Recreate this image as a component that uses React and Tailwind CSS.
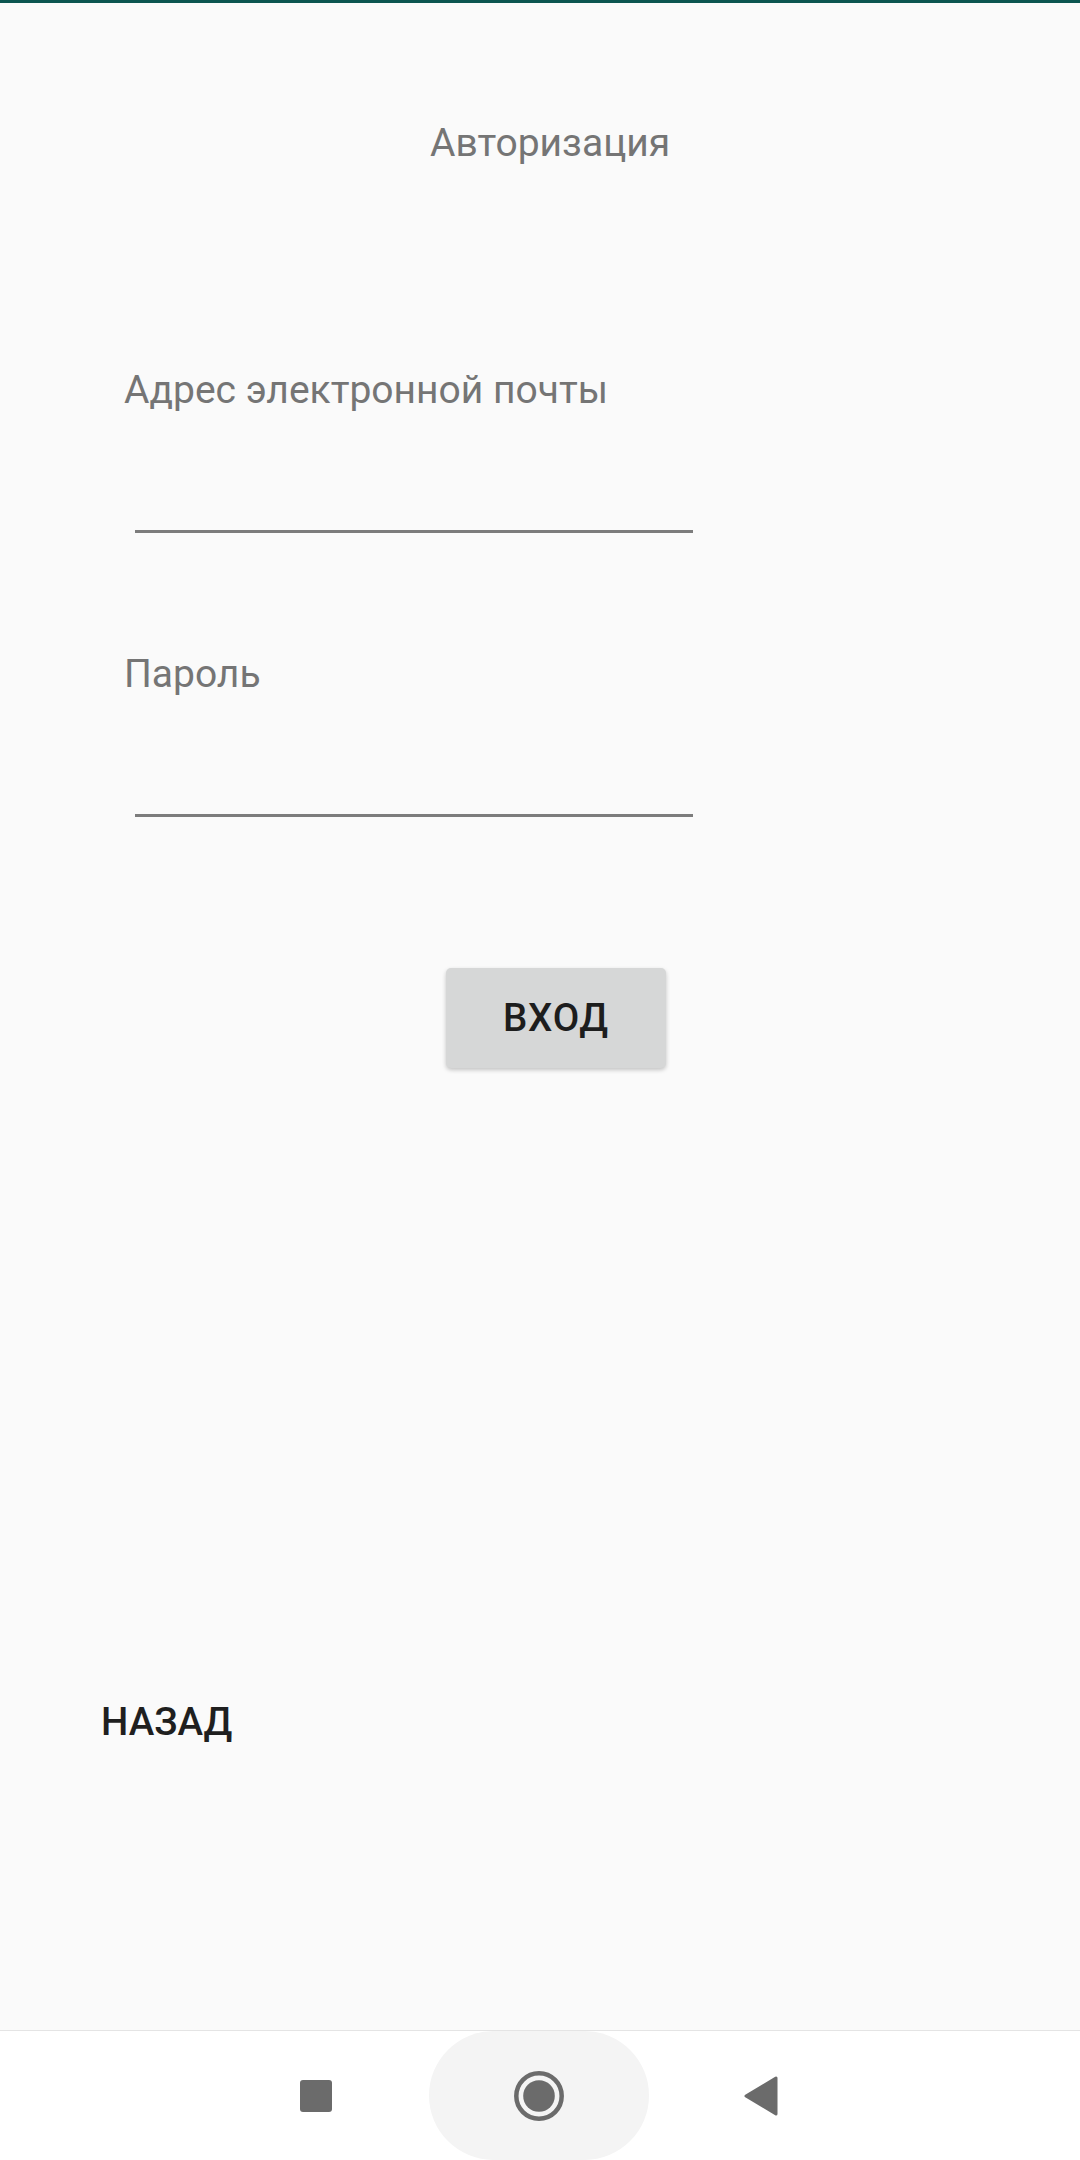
export default function App() {
  return (
    <div className="w-[1080px] h-[2160px] bg-[#fafafa] flex flex-col font-['Roboto',sans-serif] overflow-hidden">
      <div className="h-[3px] bg-[#0b5550] shrink-0" />
      <div className="flex-1 flex flex-col">
        <div className="mt-[118px] pl-[430px] text-[39px] leading-[45px] text-[#757575]">Авторизация</div>
        <div className="mt-[202px] pl-[124px] text-[39px] leading-[45px] text-[#757575]">Адрес электронной почты</div>
        <div className="mt-[117px] ml-[135px] w-[558px] h-[3px] bg-[#7c7c7c]" />
        <div className="mt-[119px] pl-[124px] text-[39px] leading-[45px] text-[#757575]">Пароль</div>
        <div className="mt-[117px] ml-[135px] w-[558px] h-[3px] bg-[#7c7c7c]" />
        <div className="mt-[151px] ml-[446px] w-[220px] h-[100px] rounded-[5px] bg-[#d6d7d7] shadow-[0_2px_4px_rgba(0,0,0,0.22)] flex items-center justify-center text-[38.5px] font-medium text-[#1d1d1d] tracking-[0.02em]">
          ВХОД
        </div>
        <div className="mt-[631px] ml-[101px] text-[38.5px] leading-[45px] font-medium text-[#1f1f1f]">НАЗАД</div>
      </div>
      <div className="h-[130px] shrink-0 bg-white border-t border-[#e4e4e4] flex items-center">
        <div className="ml-[300px] w-[32px] h-[32px] rounded-[3px] bg-[#6b6b6b]" />
        <div className="ml-[97px] w-[220px] h-[129px] rounded-full bg-[#f4f4f4] flex items-center justify-center">
          <svg width="52" height="52" viewBox="0 0 52 52">
            <circle cx="26" cy="26" r="22.7" fill="none" stroke="#6b6b6b" strokeWidth="4.5" />
            <circle cx="26" cy="26" r="15.8" fill="#6b6b6b" />
          </svg>
        </div>
        <div className="ml-[94px]">
          <svg width="36" height="42" viewBox="0 0 36 42">
            <polygon points="33,3 33,39 3,21" fill="#6b6b6b" stroke="#6b6b6b" strokeWidth="3" strokeLinejoin="round" />
          </svg>
        </div>
      </div>
    </div>
  );
}
